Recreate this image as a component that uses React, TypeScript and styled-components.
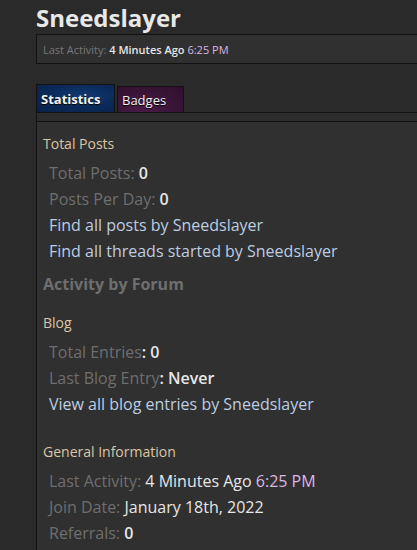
import React from "react";
import styled, { createGlobalStyle } from "styled-components";

const Global = createGlobalStyle`
  html, body { margin: 0; padding: 0; background: #2a2a2a; overflow: hidden; }
  body { font-family: "Open Sans", "Noto Sans", sans-serif; }
`;

const Page = styled.div`
  width: 700px;
  padding: 2px 0 0 36px;
  box-sizing: content-box;
`;

const Title = styled.h1`
  margin: 0;
  font: 700 24px/32px "Open Sans", sans-serif;
  color: #e8e8e8;
`;

const InfoBox = styled.div`
  height: 28px;
  border: 1px solid #121212;
  background: #303030;
  display: flex;
  align-items: center;
  padding-left: 6px;
  font-size: 11px;
  color: #777;
`;

const Value = styled.span<{ $bold?: boolean }>`
  color: #e6e6e6;
  font-weight: ${(p) => (p.$bold ? 600 : 400)};
`;

const Time = styled.span`
  color: #dcb6e0;
`;

const TabBar = styled.div`
  margin-top: 20px;
  display: flex;
  align-items: flex-end;
  gap: 2px;
  border-bottom: 1px solid #121212;
`;

const Tab = styled.div<{ $active?: boolean }>`
  box-sizing: border-box;
  height: ${(p) => (p.$active ? 28 : 26)}px;
  width: ${(p) => (p.$active ? 79 : 67)}px;
  border: 1px solid #121212;
  border-bottom: none;
  display: flex;
  align-items: center;
  padding-left: 4px;
  font-size: 13px;
  font-weight: ${(p) => (p.$active ? 700 : 400)};
  color: #f2f2f2;
  text-shadow: 0 1px 1px #000;
  background: ${(p) =>
    p.$active
      ? "radial-gradient(ellipse at 60% 40%, #123a72 0%, #0b2a5a 50%, #082249 100%)"
      : "radial-gradient(ellipse at 40% 80%, #4a1c48 0%, #3b1538 50%, #2f0f2c 100%)"};
`;

const Panel = styled.div`
  border-left: 1px solid #121212;
`;

const Strip = styled.div`
  height: 8px;
  background: #2c2c2c;
  border-bottom: 1px solid #121212;
`;

const Content = styled.div`
  background: #303030;
  padding: 12px 0 10px 6px;
`;

const SectionTitle = styled.div`
  font-size: 14px;
  line-height: 20px;
  color: #dcc4a4;
  margin-bottom: 6px;
`;

const ForumTitle = styled.div`
  font-size: 16px;
  font-weight: 700;
  line-height: 22px;
  color: #6e6e6e;
  margin-bottom: 18px;
`;

const List = styled.div<{ $after: number }>`
  padding-left: 6px;
  margin-bottom: ${(p) => p.$after}px;
`;

const Row = styled.div`
  font-size: 16px;
  line-height: 26px;
  color: #6e6e6e;
  white-space: nowrap;
`;

const LinkRow = styled(Row)`
  color: #bccde2;
`;

export default function App() {
  return (
    <>
      <Global />
      <Page>
        <Title>Sneedslayer</Title>
        <InfoBox>
          Last Activity:&nbsp;<Value $bold>4 Minutes Ago</Value>&nbsp;<Time>6:25 PM</Time>
        </InfoBox>
        <TabBar>
          <Tab $active>Statistics</Tab>
          <Tab>Badges</Tab>
        </TabBar>
        <Panel>
          <Strip />
          <Content>
            <SectionTitle>Total Posts</SectionTitle>
            <List $after={9}>
              <Row>
                Total Posts: <Value $bold>0</Value>
              </Row>
              <Row>
                Posts Per Day: <Value $bold>0</Value>
              </Row>
              <LinkRow>Find all posts by Sneedslayer</LinkRow>
              <LinkRow>Find all threads started by Sneedslayer</LinkRow>
            </List>
            <ForumTitle>Activity by Forum</ForumTitle>
            <SectionTitle>Blog</SectionTitle>
            <List $after={25}>
              <Row>
                Total Entries<Value $bold>: 0</Value>
              </Row>
              <Row>
                Last Blog Entry<Value $bold>: Never</Value>
              </Row>
              <LinkRow>View all blog entries by Sneedslayer</LinkRow>
            </List>
            <SectionTitle>General Information</SectionTitle>
            <List $after={0}>
              <Row>
                Last Activity: <Value>4 Minutes Ago</Value> <Time>6:25 PM</Time>
              </Row>
              <Row>
                Join Date: <Value>January 18th, 2022</Value>
              </Row>
              <Row>
                Referrals: <Value $bold>0</Value>
              </Row>
            </List>
          </Content>
        </Panel>
      </Page>
    </>
  );
}
